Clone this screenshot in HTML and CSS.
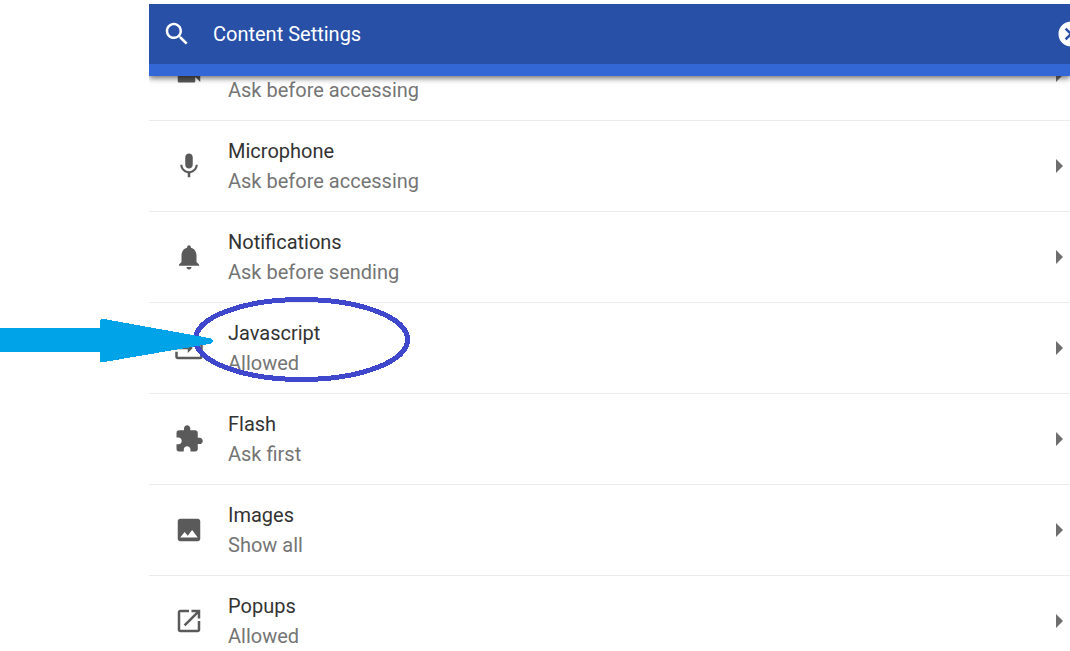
FILE: index.html
```
<!DOCTYPE html>
<html lang="en">
<head>
  <meta charset="UTF-8">
  <meta name="viewport" content="width=device-width, initial-scale=1.0">
  <title>Content Settings</title>
  <link rel="stylesheet" href="styles.css">
</head>
<body>
  <div class="panel">
    <header>
      <div class="toolbar">
        <svg class="icon" viewBox="0 0 24 24"><path d="M15.5 14h-.79l-.28-.27C15.41 12.59 16 11.11 16 9.5 16 5.91 13.09 3 9.5 3S3 5.91 3 9.5 5.91 16 9.5 16c1.61 0 3.09-.59 4.23-1.57l.27.28v.79l5 4.99L20.49 19l-4.99-5zm-6 0C7.01 14 5 11.99 5 9.5S7.01 5 9.5 5 14 7.01 14 9.5 11.99 14 9.5 14z"/></svg>
        <h1>Content Settings</h1>
        <button class="clear" aria-label="Clear search">
          <svg class="icon" viewBox="0 0 24 24"><path d="M12 2C6.47 2 2 6.47 2 12s4.47 10 10 10 10-4.47 10-10S17.53 2 12 2zm5 13.59L15.59 17 12 13.41 8.41 17 7 15.59 10.59 12 7 8.41 8.41 7 12 10.59 15.59 7 17 8.41 13.41 12 17 15.59z"/></svg>
        </button>
      </div>
    </header>
    <main class="settings">
      <button class="setting">
        <svg class="icon" viewBox="0 0 24 24"><path d="M17 10.5V7c0-.55-.45-1-1-1H4c-.55 0-1 .45-1 1v10c0 .55.45 1 1 1h12c.55 0 1-.45 1-1v-3.500l4 4v-11l-4 4z"/></svg>
        <span class="label">
          <span class="name">Camera</span>
          <span class="value">Ask before accessing</span>
        </span>
        <span class="arrow"></span>
      </button>
      <button class="setting">
        <svg class="icon" viewBox="0 0 24 24"><path d="M12 14c1.660 0 2.990-1.340 2.990-3L15 5c0-1.660-1.340-3-3-3S9 3.340 9 5v6c0 1.660 1.340 3 3 3zm5.300-3c0 3-2.540 5.100-5.300 5.100S6.700 14 6.700 11H5c0 3.410 2.720 6.230 6 6.720V21h2v-3.280c3.280-.48 6-3.300 6-6.720h-1.700z"/></svg>
        <span class="label">
          <span class="name">Microphone</span>
          <span class="value">Ask before accessing</span>
        </span>
        <span class="arrow"></span>
      </button>
      <button class="setting">
        <svg class="icon" viewBox="0 0 24 24"><path d="M12 22c1.100 0 2-.9 2-2h-4c0 1.100.89 2 2 2zm6-6v-5c0-3.070-1.640-5.640-4.500-6.320V4c0-.83-.67-1.500-1.500-1.500s-1.500.67-1.500 1.500v.68C7.630 5.360 6 7.920 6 11v5l-2 2v1h16v-1l-2-2z"/></svg>
        <span class="label">
          <span class="name">Notifications</span>
          <span class="value">Ask before sending</span>
        </span>
        <span class="arrow"></span>
      </button>
      <button class="setting">
        <svg class="icon" viewBox="0 0 24 24"><path d="M21 3.010H3c-1.100 0-2 .9-2 2V9h2V4.990h18v14.030H3V15H1v4.010c0 1.100.9 1.980 2 1.980h18c1.100 0 2-.88 2-1.980v-14c0-1.110-.9-2-2-2zM11 16l4-4-4-4v3H1v2h10v3z"/></svg>
        <span class="label">
          <span class="name">Javascript</span>
          <span class="value">Allowed</span>
        </span>
        <span class="arrow"></span>
      </button>
      <button class="setting">
        <svg class="icon" viewBox="0 0 24 24"><path d="M20.500 11H19V7c0-1.100-.9-2-2-2h-4V3.500C13 2.120 11.880 1 10.500 1S8 2.120 8 3.500V5H4c-1.100 0-1.990.9-1.990 2v3.800H3.500c1.490 0 2.700 1.210 2.700 2.700s-1.210 2.700-2.700 2.700H2V20c0 1.100.9 2 2 2h3.800v-1.500c0-1.490 1.210-2.700 2.700-2.700 1.490 0 2.700 1.210 2.700 2.700V22H17c1.100 0 2-.9 2-2v-4h1.500c1.380 0 2.500-1.120 2.500-2.500S21.880 11 20.500 11z"/></svg>
        <span class="label">
          <span class="name">Flash</span>
          <span class="value">Ask first</span>
        </span>
        <span class="arrow"></span>
      </button>
      <button class="setting">
        <svg class="icon" viewBox="0 0 24 24"><path d="M21 19V5c0-1.100-.9-2-2-2H5c-1.100 0-2 .9-2 2v14c0 1.100.9 2 2 2h14c1.100 0 2-.9 2-2zM8.500 13.500l2.500 3.010L14.500 12l4.500 6H5l3.500-4.500z"/></svg>
        <span class="label">
          <span class="name">Images</span>
          <span class="value">Show all</span>
        </span>
        <span class="arrow"></span>
      </button>
      <button class="setting">
        <svg class="icon" viewBox="0 0 24 24"><path d="M19 19H5V5h7V3H5c-1.110 0-2 .9-2 2v14c0 1.100.89 2 2 2h14c1.100 0 2-.9 2-2v-7h-2v7zM14 3v2h3.590l-9.830 9.830 1.410 1.410L19 6.410V10h2V3h-7z"/></svg>
        <span class="label">
          <span class="name">Popups</span>
          <span class="value">Allowed</span>
        </span>
        <span class="arrow"></span>
      </button>
    </main>
  </div>

  <!-- arrow and circle pointing at the Javascript row -->
  <svg class="marker" width="420" height="100" viewBox="0 0 420 100">
    <ellipse cx="301.5" cy="49.5" rx="106" ry="40"/>
    <path d="M0 38H100V31Q100 28 104 29L209 48Q213 49 213 51Q213 53 209 54L104 72Q100 73 100 70V62H0z"/>
  </svg>
</body>
</html>
```
FILE: styles.css
```
html, body {
  height: 100%;
}

body {
  box-sizing: border-box;
  margin: 0;
  padding: 4px 0 0 149px;
  overflow: hidden;
  background: white;
  font-family: Roboto, sans-serif;
  font-size: 20px;
  line-height: 30px;
}

.panel {
  height: 100%;
  display: flex;
  flex-direction: column;
  overflow: hidden;
}

header {
  position: relative;
  z-index: 1;
  flex-shrink: 0;
  background: #2850a7;
  border-bottom: 12px solid #3367d6;
  box-shadow: 0 2px 6px rgba(0, 0, 0, 0.6);
}

.toolbar {
  display: flex;
  align-items: center;
  height: 60px;
  padding-left: 13px;
  color: white;
}

h1 {
  flex-grow: 1;
  margin: 0 0 0 21px;
  font-size: 20px;
  font-weight: 400;
}

button {
  padding: 0;
  border: 0;
  background: none;
  color: inherit;
  font: inherit;
  text-align: left;
  cursor: pointer;
}

.icon {
  display: block;
  flex-shrink: 0;
  width: 30px;
  height: 30px;
  fill: currentColor;
}

/* the toolbar runs past the right edge of the window */
.clear {
  margin-right: -16px;
}

.settings {
  display: flex;
  flex-direction: column;
}

.setting {
  display: flex;
  align-items: center;
  flex-shrink: 0;
  padding: 15px 7px 15px 25px;
  border-bottom: 1px solid #ebebeb;
  color: #5a5a5a;
}

/* list is scrolled, the first row is half under the header */
.setting:first-child {
  margin-top: -46px;
}

.setting:hover {
  background: #fafafa;
}

.label {
  display: flex;
  flex-direction: column;
  flex-grow: 1;
  margin-left: 24px;
}

.name {
  color: #333;
}

.value {
  color: #757575;
}

.arrow {
  border-left: 7px solid #6e6e6e;
  border-top: 7px solid transparent;
  border-bottom: 7px solid transparent;
}

.marker {
  position: absolute;
  top: 290px;
  left: 0;
  pointer-events: none;
  shape-rendering: crispEdges;
}

.marker ellipse {
  fill: none;
  stroke: #3f48cc;
  stroke-width: 5px;
}

.marker path {
  fill: #00a2e8;
}
```
